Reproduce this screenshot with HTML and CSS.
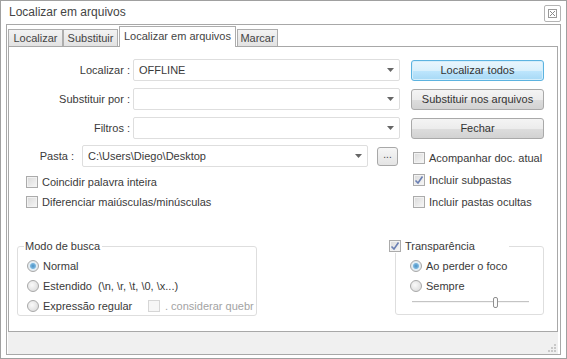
FILE: index.html
```html
<!doctype html>
<html>
<head>
<meta charset="utf-8">
<title>Localizar em arquivos</title>
<link rel="stylesheet" href="styles.css">
</head>
<body>
<div class="window">
	<div class="titlebar">
		<span class="title">Localizar em arquivos</span>
		<span class="close">
			<svg width="9" height="9" viewBox="0 0 9 9"><rect x="0.5" y="0.5" width="8" height="8" fill="none" stroke="#9a9a9a"/><path d="M2 2L7 7M7 2L2 7" stroke="#8a8a8a" stroke-width="1"/></svg>
		</span>
	</div>

	<div class="frame">
		<div class="tabs">
			<span class="tab t1">Localizar</span>
			<span class="tab t2">Substituir</span>
			<span class="tab active">Localizar em arquivos</span>
			<span class="tab t4">Marcar</span>
		</div>

		<div class="panel">
			<div class="top">
				<div class="fields">
					<div class="row">
						<label class="lbl">Localizar :</label>
						<div class="combo"><span class="val">OFFLINE</span><svg class="arrow" width="7" height="4"><path d="M0 0H7L3.5 4Z" fill="#666"/></svg></div>
					</div>
					<div class="row">
						<label class="lbl">Substituir por :</label>
						<div class="combo"><span class="val"></span><svg class="arrow" width="7" height="4"><path d="M0 0H7L3.5 4Z" fill="#666"/></svg></div>
					</div>
					<div class="row">
						<label class="lbl">Filtros :</label>
						<div class="combo"><span class="val"></span><svg class="arrow" width="7" height="4"><path d="M0 0H7L3.5 4Z" fill="#666"/></svg></div>
					</div>
					<div class="row pasta">
						<label class="lbl">Pasta :</label>
						<div class="combo"><span class="val">C:\Users\Diego\Desktop</span><svg class="arrow" width="7" height="4"><path d="M0 0H7L3.5 4Z" fill="#666"/></svg></div>
						<span class="browse">...</span>
					</div>
					<div class="opts">
						<div class="opt"><span class="chk"></span>Coincidir palavra inteira</div>
						<div class="opt"><span class="chk"></span>Diferenciar maiúsculas/minúsculas</div>
					</div>
				</div>

				<div class="side">
					<span class="btn default">Localizar todos</span>
					<span class="btn">Substituir nos arquivos</span>
					<span class="btn">Fechar</span>
					<div class="side-opts">
						<div class="opt"><span class="chk"></span>Acompanhar doc. atual</div>
						<div class="opt"><span class="chk on"><svg width="10" height="10" viewBox="0 0 10 10"><path d="M1.5 5.5L4 8L8.5 1.5" fill="none" stroke="#6a7fb3" stroke-width="1.6"/></svg></span>Incluir subpastas</div>
						<div class="opt"><span class="chk"></span>Incluir pastas ocultas</div>
					</div>
				</div>
			</div>

			<div class="groups">
				<fieldset class="group mode">
					<legend>Modo de busca</legend>
					<div class="opt"><span class="rad on"></span>Normal</div>
					<div class="opt"><span class="rad"></span>Estendido&nbsp; (\n, \r, \t, \0, \x...)</div>
					<div class="opt">
						<span class="regex"><span class="rad"></span>Expressão regular</span>
						<span class="chk off"></span>
						<span class="dim">. considerar quebr</span>
					</div>
				</fieldset>

				<fieldset class="group transp">
					<legend><span class="chk on"><svg width="10" height="10" viewBox="0 0 10 10"><path d="M1.5 5.5L4 8L8.5 1.5" fill="none" stroke="#6a7fb3" stroke-width="1.6"/></svg></span>Transparência</legend>
					<div class="opt"><span class="rad on"></span>Ao perder o foco</div>
					<div class="opt"><span class="rad"></span>Sempre</div>
					<div class="slider"><span class="track a"></span><span class="thumb"></span><span class="track b"></span></div>
				</fieldset>
			</div>
		</div>

		<div class="status">
			<svg class="grip" width="8" height="8" viewBox="0 0 8 8"><rect x="6" y="0" width="2" height="2" fill="#c8c8c8"/><rect x="3" y="3" width="2" height="2" fill="#c8c8c8"/><rect x="6" y="3" width="2" height="2" fill="#c8c8c8"/><rect x="0" y="6" width="2" height="2" fill="#c8c8c8"/><rect x="3" y="6" width="2" height="2" fill="#c8c8c8"/><rect x="6" y="6" width="2" height="2" fill="#c8c8c8"/></svg>
		</div>
	</div>
</div>
</body>
</html>
```

FILE: styles.css
```css
*{ margin:0; padding:0; box-sizing:border-box}
body{ background:#fff; overflow:hidden; font-family:"Liberation Sans", Arial, sans-serif; font-size:11px; color:#3a3a3a}

.window{ width:567px; height:359px; border:1px solid #a0a0a0; padding:0 5px 3px 5px; display:flex; flex-direction:column; background:#fff}
.titlebar{ height:23px; display:flex; justify-content:space-between; align-items:flex-start; padding-left:3px}
.title{ font-size:12px; line-height:22px; color:#444}
.close{ width:17px; height:17px; margin-top:4px; border:1px solid #b4b4b4; border-radius:2px; display:flex; align-items:center; justify-content:center}

.frame{ height:331px; border:1px solid #a8a8a8; padding:0 2px 0 1px; display:flex; flex-direction:column}

.tabs{ height:21px; display:flex; align-items:flex-end}
.tab{ height:17px; line-height:16px; border:1px solid #adadad; border-bottom:none; background:linear-gradient(#f3f3f3,#e2e2e2); text-align:center; color:#444}
.tab.t1{ width:55px}
.tab.t2{ width:55px}
.tab.t4{ width:41px; margin-left:1px}
.tab.active{ width:117px; height:21px; margin-left:1px; margin-bottom:-1px; padding-bottom:2px; line-height:18px; background:#fff; position:relative; z-index:1}

.panel{ height:286px; border:1px solid #a8a8a8; background:#fff}
.top{ display:flex; height:165px}

.fields{ width:391px; padding-top:12px}
.row{ display:flex; align-items:center; height:22px; margin-bottom:7px}
.lbl{ width:121px; margin-right:3px; text-align:right; white-space:nowrap}
.combo{ width:267px; height:22px; border:1px solid #dedede; border-radius:2px; display:flex; align-items:center; justify-content:space-between; padding:0 5px 0 5px; background:#fff}
.val{ white-space:nowrap}
.row.pasta{ margin-bottom:5px; margin-top:-1px}
.row.pasta .lbl{ width:65px; margin-right:8px}
.row.pasta .combo{ width:286px}
.browse{ width:21px; height:19px; margin-left:9px; border:1px solid #a8a8a8; border-radius:3px; background:linear-gradient(#f6f6f6,#e4e4e4); line-height:13px; text-align:center; font-size:10px; color:#444}

.opts{ padding-left:17px}
.opt{ height:20px; display:flex; align-items:center; white-space:nowrap}

.chk{ width:12px; height:12px; margin-right:4px; flex:none; border:1px solid #ababab; background:linear-gradient(135deg,#d9d9d9,#f7f7f7); box-shadow:inset 0 0 0 1px #f2f2f2; display:flex; align-items:center; justify-content:center}
.chk.off{ border-color:#d6d6d6; background:#f6f6f6; box-shadow:none}
.rad{ width:12px; height:12px; margin-right:4px; flex:none; border:1px solid #a8a8a8; border-radius:50%; background:radial-gradient(circle at 40% 40%,#fafafa,#d6d6d6)}
.rad.on{ background:radial-gradient(circle,#4a8fc4 0,#7ab6de 2.5px,#e2eef6 3.5px,#e4e4e4 6px)}

.side{ width:133px; margin-left:11px; padding-top:13px; display:flex; flex-direction:column}
.btn{ height:21px; margin-bottom:8px; border:1px solid #a9a9a9; border-radius:3px; background:linear-gradient(#f4f4f4 0,#ececec 50%,#dddddd 51%,#d2d2d2 100%); text-align:center; line-height:19px; color:#333; white-space:nowrap}
.btn.default{ border-color:#5cb3e0; background:linear-gradient(#eaf6fd 0,#d9f0fc 50%,#bee6fd 51%,#a7d9f5 100%); box-shadow:inset 0 0 0 1px #d5eefb}
.side-opts{ padding-left:2px}
.side-opts .opt{ height:22px}

.groups{ display:flex; align-items:flex-start; margin-top:27px}
.group{ border:1px solid #dedede; border-radius:3px; min-width:0}
.group legend{ line-height:14px; display:flex; align-items:center}
.group .opt{ height:20px}

.mode{ width:240px; height:77px; margin-left:8px; padding:3px 0 0 9px}
.mode legend{ margin-left:-3px; padding:0 2px 0 1px}
.regex{ width:121px; display:flex; align-items:center}
.mode .chk.off{ margin-right:5px}
.dim{ color:#a3a3a3}

.transp{ width:149px; height:76px; margin-left:138px; padding:3px 0 0 14px}
.transp legend{ width:120px; margin-left:-21px}
.transp legend .chk{ margin-right:4px}

.slider{ width:117px; height:12px; margin-left:2px; display:flex; align-items:center}
.track{ height:2px; border-top:1px solid #c4c4c4; border-bottom:1px solid #f4f4f4}
.track.a{ width:81px}
.track.b{ flex:1}
.thumb{ width:5px; height:11px; border:1px solid #8f8f8f; border-radius:2px; background:#fbfbfb}

.status{ flex:1; background:#f0f0f0; display:flex; justify-content:flex-end; align-items:flex-end; padding:0 2px 2px 0}
```
